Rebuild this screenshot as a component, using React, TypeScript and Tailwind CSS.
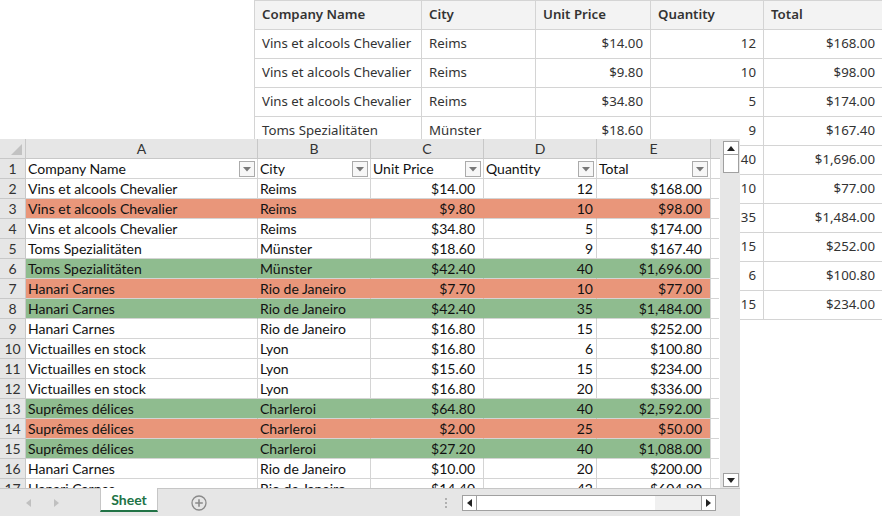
import React from "react";

type Row = [string, string, string, string, string];

const topRows: Row[] = [
  ["Vins et alcools Chevalier", "Reims", "$14.00", "12", "$168.00"],
  ["Vins et alcools Chevalier", "Reims", "$9.80", "10", "$98.00"],
  ["Vins et alcools Chevalier", "Reims", "$34.80", "5", "$174.00"],
  ["Toms Spezialitäten", "Münster", "$18.60", "9", "$167.40"],
  ["Toms Spezialitäten", "Münster", "$42.40", "40", "$1,696.00"],
  ["Hanari Carnes", "Rio de Janeiro", "$7.70", "10", "$77.00"],
  ["Hanari Carnes", "Rio de Janeiro", "$42.40", "35", "$1,484.00"],
  ["Hanari Carnes", "Rio de Janeiro", "$16.80", "15", "$252.00"],
  ["Victuailles en stock", "Lyon", "$16.80", "6", "$100.80"],
  ["Victuailles en stock", "Lyon", "$15.60", "15", "$234.00"],
];

type SRow = { d: Row; c?: "r" | "g" };
const sheetRows: SRow[] = [
  { d: ["Vins et alcools Chevalier", "Reims", "$14.00", "12", "$168.00"] },
  { d: ["Vins et alcools Chevalier", "Reims", "$9.80", "10", "$98.00"], c: "r" },
  { d: ["Vins et alcools Chevalier", "Reims", "$34.80", "5", "$174.00"] },
  { d: ["Toms Spezialitäten", "Münster", "$18.60", "9", "$167.40"] },
  { d: ["Toms Spezialitäten", "Münster", "$42.40", "40", "$1,696.00"], c: "g" },
  { d: ["Hanari Carnes", "Rio de Janeiro", "$7.70", "10", "$77.00"], c: "r" },
  { d: ["Hanari Carnes", "Rio de Janeiro", "$42.40", "35", "$1,484.00"], c: "g" },
  { d: ["Hanari Carnes", "Rio de Janeiro", "$16.80", "15", "$252.00"] },
  { d: ["Victuailles en stock", "Lyon", "$16.80", "6", "$100.80"] },
  { d: ["Victuailles en stock", "Lyon", "$15.60", "15", "$234.00"] },
  { d: ["Victuailles en stock", "Lyon", "$16.80", "20", "$336.00"] },
  { d: ["Suprêmes délices", "Charleroi", "$64.80", "40", "$2,592.00"], c: "g" },
  { d: ["Suprêmes délices", "Charleroi", "$2.00", "25", "$50.00"], c: "r" },
  { d: ["Suprêmes délices", "Charleroi", "$27.20", "40", "$1,088.00"], c: "g" },
  { d: ["Hanari Carnes", "Rio de Janeiro", "$10.00", "20", "$200.00"] },
  { d: ["Hanari Carnes", "Rio de Janeiro", "$14.40", "42", "$604.80"] },
];

const topWidths = ["w-[167px]", "w-[114px]", "w-[115px]", "w-[113px]", "w-[119px]"];
const headers = ["Company Name", "City", "Unit Price", "Quantity", "Total"];

function FilterBtn() {
  return (
    <div className="absolute right-[2px] top-[2px] w-[16px] h-[16px] border border-[#ababab] bg-[#f7f7f7] flex items-center justify-center">
      <svg width="8" height="5" viewBox="0 0 8 5">
        <path d="M0 0 L8 0 L4 4.5 Z" fill="#777" />
      </svg>
    </div>
  );
}

function Tri({ dir, color = "#222" }: { dir: "up" | "down" | "left" | "right"; color?: string }) {
  const paths: Record<string, string> = {
    up: "M0 5 L8 5 L4 0 Z",
    down: "M0 0 L8 0 L4 5 Z",
    left: "M5 0 L5 8 L0 4 Z",
    right: "M0 0 L0 8 L5 4 Z",
  };
  const vert = dir === "up" || dir === "down";
  return (
    <svg width={vert ? 8 : 5} height={vert ? 5 : 8} viewBox={vert ? "0 0 8 5" : "0 0 5 8"}>
      <path d={paths[dir]} fill={color} />
    </svg>
  );
}

export default function App() {
  const cols = ["A", "B", "C", "D", "E"];
  const colW = ["w-[232px]", "w-[113px]", "w-[113px]", "w-[113px]", "w-[114px]"];
  return (
    <div className="relative w-[882px] h-[516px] bg-white overflow-hidden">
      {/* Background table */}
      <div className="ml-[254px] text-[13.25px] text-[#333] font-['Noto_Sans',sans-serif] whitespace-nowrap">
        <div className="flex h-[30px] bg-[#f3f3f3] border-t border-[#d4d4d4]">
          {headers.map((h, i) => (
            <div
              key={h}
              className={`${topWidths[i]} shrink-0 border-l border-b border-[#d4d4d4] px-[7px] flex items-center font-semibold`}
            >
              {h}
            </div>
          ))}
        </div>
        {topRows.map((r, ri) => (
          <div key={ri} className="flex h-[29px]">
            {r.map((c, i) => (
              <div
                key={i}
                className={`${topWidths[i]} shrink-0 border-l border-b border-[#d4d4d4] px-[7px] flex items-center overflow-hidden ${
                  i >= 2 ? "justify-end" : ""
                }`}
              >
                {c}
              </div>
            ))}
          </div>
        ))}
      </div>

      {/* Spreadsheet overlay */}
      <div className="absolute left-0 top-[139px] w-[740px] h-[377px] flex flex-col bg-[#e6e6e6] font-['Lato',sans-serif] text-[14px] text-[#111]">
        <div className="flex h-[349px]">
          <div className="w-[720px] h-[349px] overflow-hidden bg-white">
            {/* column header */}
            <div className="flex h-[20px] bg-[#e6e6e6] text-[#333]">
              <div className="w-[26px] shrink-0 border-r border-b border-[#c8c8c8] relative">
                <svg className="absolute right-[3px] bottom-[3px]" width="11" height="11" viewBox="0 0 11 11">
                  <path d="M11 0 L11 11 L0 11 Z" fill="#c2c2c2" />
                </svg>
              </div>
              {cols.map((c, i) => (
                <div
                  key={c}
                  className={`${colW[i]} shrink-0 border-r border-b border-[#c8c8c8] flex items-center justify-center`}
                >
                  {c}
                </div>
              ))}
              <div className="w-[9px] shrink-0 border-b border-[#c8c8c8]" />
            </div>
            {/* row 1 headers */}
            <div className="flex h-[20px]">
              <div className="w-[26px] shrink-0 bg-[#e6e6e6] border-r border-b border-[#c8c8c8] flex items-center justify-center text-[#333]">
                1
              </div>
              {headers.map((h, i) => (
                <div
                  key={h}
                  className={`${colW[i]} shrink-0 relative border-r border-b border-[#d4d4d4] flex items-center px-[2px]`}
                >
                  {h}
                  <FilterBtn />
                </div>
              ))}
              <div className="w-[9px] shrink-0 border-b border-[#d4d4d4]" />
            </div>
            {sheetRows.map((r, ri) => {
              const bg = r.c === "r" ? "bg-[#e9967a]" : r.c === "g" ? "bg-[#8fbc8f]" : "bg-white";
              const rb = r.c ? "border-r-transparent" : "border-r-[#d4d4d4]";
              return (
                <div key={ri} className="flex h-[20px]">
                  <div className="w-[26px] shrink-0 bg-[#e6e6e6] border-r border-b border-[#c8c8c8] flex items-center justify-center text-[#333]">
                    {ri + 2}
                  </div>
                  {r.d.map((c, i) => (
                    <div
                      key={i}
                      className={`${colW[i]} shrink-0 ${bg} border-b border-r border-b-[#d4d4d4] ${rb} flex items-center whitespace-nowrap overflow-hidden ${
                        i >= 2 ? "justify-end" : "px-[2px]"
                      } ${i === 2 || i === 4 ? "pr-[8px]" : i === 3 ? "pr-[3px]" : ""}`}
                    >
                      {c}
                    </div>
                  ))}
                  <div className="w-[9px] shrink-0 border-l border-b border-[#d4d4d4] -ml-px" />
                </div>
              );
            })}
          </div>
          {/* vertical scrollbar */}
          <div className="w-[20px] h-[349px] flex flex-col items-start pl-[3px] pt-[2px] pb-[1px]">
            <div className="w-[16px] h-[14px] bg-white border border-[#a0a0a0] flex items-center justify-center">
              <Tri dir="up" />
            </div>
            <div className="w-[16px] h-[18px] bg-white border border-[#a0a0a0] border-t-0" />
            <div className="flex-1" />
            <div className="w-[16px] h-[14px] bg-white border border-[#a0a0a0] flex items-center justify-center">
              <Tri dir="down" />
            </div>
          </div>
        </div>
        {/* tab bar */}
        <div className="h-[28px] flex items-stretch border-t border-[#c6c6c6] bg-[#e6e6e6]">
          <div className="w-[100px] flex items-center">
            <div className="ml-[26px]">
              <Tri dir="left" color="#c0c0c0" />
            </div>
            <div className="ml-[23px]">
              <Tri dir="right" color="#c0c0c0" />
            </div>
          </div>
          <div className="w-[58px] h-[24px] bg-white border-l border-r border-[#c6c6c6] border-b-[2px] border-b-[#217346] flex items-center justify-center font-bold text-[#217346] -mt-px pt-[1px]">
            Sheet
          </div>
          <div className="ml-[33px] flex items-center">
            <svg width="16" height="16" viewBox="0 0 16 16">
              <circle cx="8" cy="8" r="7" fill="none" stroke="#8a8a8a" strokeWidth="1.3" />
              <path d="M8 4.2 V11.8 M4.2 8 H11.8" stroke="#8a8a8a" strokeWidth="1.6" />
            </svg>
          </div>
          <div className="ml-[238px] flex items-center">
            <div className="flex flex-col gap-[2px]">
              <div className="w-[2px] h-[2px] bg-[#b0b0b0]" />
              <div className="w-[2px] h-[2px] bg-[#b0b0b0]" />
              <div className="w-[2px] h-[2px] bg-[#b0b0b0]" />
            </div>
          </div>
          <div className="ml-[15px] flex items-center">
            <div className="flex h-[16px] w-[254px] border border-[#a0a0a0] bg-[#f0f0f0]">
              <div className="w-[14px] h-full bg-white border-r border-[#a0a0a0] flex items-center justify-center">
                <Tri dir="left" />
              </div>
              <div className="w-[178px] h-full bg-white" />
              <div className="flex-1" />
              <div className="w-[14px] h-full bg-white border-l border-[#a0a0a0] flex items-center justify-center">
                <Tri dir="right" />
              </div>
            </div>
          </div>
        </div>
      </div>
    </div>
  );
}
